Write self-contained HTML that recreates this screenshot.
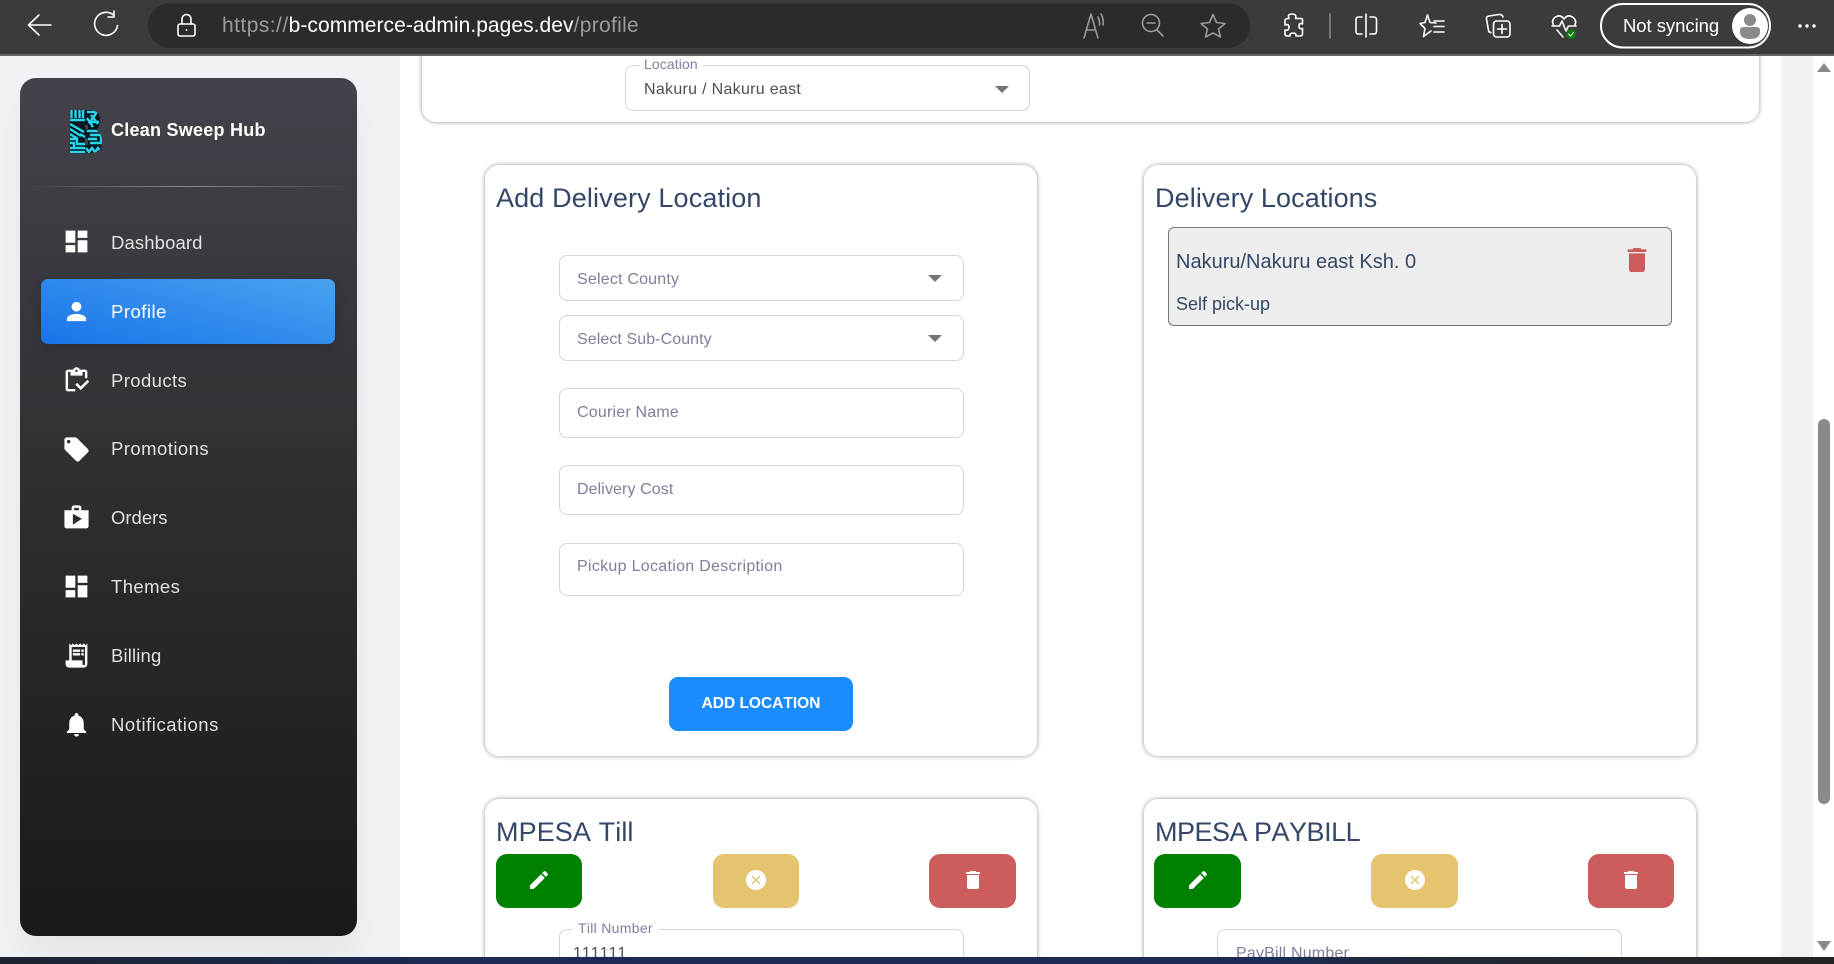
<!DOCTYPE html>
<html><head><meta charset="utf-8"><title>Profile</title>
<style>
*{box-sizing:border-box}
html,body{margin:0;padding:0;width:1834px;height:964px;overflow:hidden;background:#f0f2f5;font-family:"Liberation Sans",Arial,sans-serif;font-kerning:none}
#wrap{position:absolute;left:0;top:0;width:1834px;height:964px;overflow:hidden;background:#f0f2f5}
.a{position:absolute}
.t{position:absolute;white-space:nowrap;line-height:30px;height:30px}
#main{position:absolute;left:400px;top:56px;width:1381px;height:901px;background:#fff}
.card{position:absolute;background:#fff;border-radius:14px;box-shadow:0 0 5px rgba(0,0,0,.42)}
.f{position:absolute;border:1px solid #d2d6da;border-radius:8px;background:#fff}
.ph{color:#7b809a;font-size:16px;letter-spacing:.2px}
.h{color:#344767;font-size:27px;letter-spacing:.1px}
.car{position:absolute;width:0;height:0;border-left:7px solid transparent;border-right:7px solid transparent;border-top:7px solid #757575}
.nav{color:rgba(255,255,255,.86);font-size:18.5px;left:111px}
.ic{position:absolute;left:62px;width:29px;height:29px;fill:#fff}
.btn{position:absolute;top:854px;height:54px;border-radius:11px}
.btn svg{position:absolute;left:50%;top:50%;width:24px;height:24px;margin:-13px 0 0 -12px;fill:#fff}
.g{background:#008000}.y{background:#e5c470}.r{background:#cd5c5c}
</style></head><body><div id="wrap">

<!-- sidebar -->
<div class="a" style="left:20px;top:78px;width:337px;height:858px;border-radius:16px;background:linear-gradient(180deg,#42424a,#191919);box-shadow:0 20px 27px rgba(0,0,0,.05)"></div>
<svg class="a" style="left:70px;top:110px;width:32px;height:43px" viewBox="0 0 32 43">
<defs><clipPath id="b"><path d="M0 0H21Q30 1 30 10Q30 17 26 20Q32 23 32 31Q32 43 21 43H0ZM15 15V19H18V15ZM15 28V35H18V28Z" clip-rule="evenodd"/></clipPath></defs>
<g clip-path="url(#b)"><rect width="32" height="43" fill="#06181e"/>
<g stroke="#2bd4ee" stroke-width="2.400" fill="none">
<path d="M1.500 0V8M5.500 0V8M9.500 0V8M13 0V8M0 10H15M0 14L14 22M0 19L11 26M0 24L8 29M0 29H7V34H15M0 33H4V37M0 38H15M0 42H15"/>
<path d="M17 2H27L20 12H29M21 5L28 14M17 8L23 17M17 21H30M20 25H31V33M18 29H27M20 33H32M16 38L19 42L22 38L25 42L28 38L31 42"/>
<path d="M10 24L15 27"/>
</g></g></svg>
<div class="t" style="left:111px;top:115px;color:#fff;font-weight:bold;font-size:18px;letter-spacing:.25px">Clean Sweep Hub</div>
<div class="a" style="left:20px;top:186px;width:337px;height:1px;background:linear-gradient(90deg,rgba(255,255,255,0),rgba(255,255,255,.4),rgba(255,255,255,0))"></div>

<div class="a" style="left:41px;top:279px;width:294px;height:65px;border-radius:7px;background:linear-gradient(195deg,#49a3f1,#1a73e8);box-shadow:0 4px 12px rgba(0,0,0,.18)"></div>

<svg class="ic" style="top:227px" viewBox="0 0 24 24"><path d="M3 13h8V3H3v10zm0 8h8v-6H3v6zm10 0h8V11h-8v10zm0-18v6h8V3h-8z"/></svg>
<div class="t nav" style="top:228px;letter-spacing:.12px">Dashboard</div>
<svg class="ic" style="top:297px" viewBox="0 0 24 24"><path d="M12 12c2.21 0 4-1.79 4-4s-1.79-4-4-4-4 1.79-4 4 1.79 4 4 4zm0 2c-2.67 0-8 1.34-8 4v2h16v-2c0-2.66-5.33-4-8-4z"/></svg>
<div class="t nav" style="top:297px;color:#fff;letter-spacing:.5px">Profile</div>
<svg class="ic" style="top:366px" viewBox="0 0 24 24"><path d="M5 5h2v3h10V5h2v5h2V5c0-1.1-.9-2-2-2h-4.18C14.4 1.84 13.3 1 12 1s-2.4.84-2.82 2H5c-1.1 0-2 .9-2 2v14c0 1.1.9 2 2 2h6v-2H5V5zm7-2c.55 0 1 .45 1 1s-.45 1-1 1-1-.45-1-1 .45-1 1-1z"/><path d="M21 11.5L15.51 17l-3.01-3-1.5 1.5 4.51 4.5 6.99-7z"/></svg>
<div class="t nav" style="top:366px;letter-spacing:.4px">Products</div>
<svg class="ic" style="top:435px" viewBox="0 0 24 24"><path d="M21.41 11.58l-9-9C12.05 2.22 11.55 2 11 2H4c-1.1 0-2 .9-2 2v7c0 .55.22 1.05.59 1.42l9 9c.36.36.86.58 1.41.58.55 0 1.05-.22 1.41-.59l7-7c.37-.36.59-.86.59-1.41 0-.55-.23-1.06-.59-1.42zM5.5 7C4.67 7 4 6.33 4 5.5S4.67 4 5.5 4 7 4.67 7 5.5 6.33 7 5.5 7z"/></svg>
<div class="t nav" style="top:434px;letter-spacing:.45px">Promotions</div>
<svg class="ic" style="top:503px" viewBox="0 0 24 24"><path d="M16 6V4c0-1.11-.89-2-2-2h-4c-1.11 0-2 .89-2 2v2H2v13c0 1.11.89 2 2 2h16c1.11 0 2-.89 2-2V6h-6zm-6-2h4v2h-4V4zM9 18V9l7.5 4L9 18z"/></svg>
<div class="t nav" style="top:503px">Orders</div>
<svg class="ic" style="top:572px" viewBox="0 0 24 24"><path d="M3 13h8V3H3v10zm0 8h8v-6H3v6zm10 0h8V11h-8v10zm0-18v6h8V3h-8z"/></svg>
<div class="t nav" style="top:572px;letter-spacing:.4px">Themes</div>
<svg class="ic" style="top:641px" viewBox="0 0 24 24"><path d="M19.5 3.5 18 2l-1.5 1.5L15 2l-1.5 1.5L12 2l-1.5 1.5L9 2 7.5 3.5 6 2v14H3v3c0 1.66 1.34 3 3 3h12c1.66 0 3-1.34 3-3V2l-1.5 1.5zM19 19c0 .55-.45 1-1 1s-1-.45-1-1v-3H8V5h11v14z"/><path d="M9 7h6v2H9zm7 0h2v2h-2zm-7 3h6v2H9zm7 0h2v2h-2z"/></svg>
<div class="t nav" style="top:641px;letter-spacing:.15px">Billing</div>
<svg class="ic" style="top:710px" viewBox="0 0 24 24"><path d="M12 22c1.1 0 2-.9 2-2h-4c0 1.1.89 2 2 2zm6-6v-5c0-3.07-1.64-5.64-4.5-6.32V4c0-.83-.67-1.5-1.5-1.5s-1.5.67-1.5 1.5v.68C7.63 5.36 6 7.92 6 11v5l-2 2v1h16v-1l-2-2z"/></svg>
<div class="t nav" style="top:710px;letter-spacing:.55px">Notifications</div>

<!-- main -->
<div id="main"></div>

<!-- top card -->
<div class="card" style="left:422px;top:20px;width:1337px;height:102px"></div>
<div class="f" style="left:625px;top:65px;width:405px;height:46px"></div>
<div class="t" style="left:639px;top:49px;color:#7b809a;font-size:14px;background:#fff;padding:0 5px;height:22px;line-height:30px;overflow:visible;letter-spacing:.1px">Location</div>
<div class="t" style="left:644px;top:75px;color:#495057;font-size:16px;letter-spacing:.3px">Nakuru / Nakuru east</div>
<div class="car" style="left:995px;top:86px"></div>

<!-- add location card -->
<div class="card" style="left:485px;top:165px;width:552px;height:591px"></div>
<div class="t h" style="left:496px;top:183px;letter-spacing:.14px">Add Delivery Location</div>
<div class="f" style="left:559px;top:255px;width:405px;height:46px"></div>
<div class="t ph" style="left:577px;top:265px">Select County</div>
<div class="car" style="left:928px;top:275px"></div>
<div class="f" style="left:559px;top:315px;width:405px;height:46px"></div>
<div class="t ph" style="left:577px;top:325px;letter-spacing:.08px">Select Sub-County</div>
<div class="car" style="left:928px;top:335px"></div>
<div class="f" style="left:559px;top:388px;width:405px;height:50px"></div>
<div class="t ph" style="left:577px;top:398px">Courier Name</div>
<div class="f" style="left:559px;top:465px;width:405px;height:50px"></div>
<div class="t ph" style="left:577px;top:475px;letter-spacing:.1px">Delivery Cost</div>
<div class="f" style="left:559px;top:543px;width:405px;height:53px"></div>
<div class="t ph" style="left:577px;top:552px;letter-spacing:.3px">Pickup Location Description</div>
<div class="a" style="left:669px;top:677px;width:184px;height:54px;border-radius:9px;background:#1a8cff;color:#fff;font-weight:bold;font-size:15.5px;text-align:center;line-height:54px">ADD LOCATION</div>

<!-- delivery locations card -->
<div class="card" style="left:1144px;top:165px;width:552px;height:591px"></div>
<div class="t h" style="left:1155px;top:183px">Delivery Locations</div>
<div class="a" style="left:1168px;top:227px;width:504px;height:99px;background:#eee;border:1px solid #777;border-radius:6px"></div>
<div class="t" style="left:1176px;top:247px;color:#344767;font-size:20px">Nakuru/Nakuru east Ksh. 0</div>
<div class="t" style="left:1176px;top:289px;color:#344767;font-size:18px">Self pick-up</div>
<svg class="a" style="left:1621px;top:244px;width:32px;height:32px;fill:#cd5c5c" viewBox="0 0 24 24"><path d="M6 19c0 1.1.9 2 2 2h8c1.1 0 2-.9 2-2V7H6v12zM19 4h-3.5l-1-1h-5l-1 1H5v2h14V4z"/></svg>

<!-- mpesa till -->
<div class="card" style="left:485px;top:799px;width:552px;height:165px;border-radius:14px 14px 0 0"></div>
<div class="t h" style="left:496px;top:817px">MPESA Till</div>
<div class="btn g" style="left:496px;width:86px"><svg viewBox="0 0 24 24"><path d="M3 17.25V21h3.75L17.81 9.94l-3.75-3.75L3 17.25zM20.71 7.04c.39-.39.39-1.02 0-1.41l-2.34-2.34c-.39-.39-1.02-.39-1.41 0l-1.83 1.83 3.75 3.75 1.83-1.83z"/></svg></div>
<div class="btn y" style="left:713px;width:86px"><svg viewBox="0 0 24 24"><circle cx="12" cy="12" r="10"/><path d="M8 8l8 8M16 8l-8 8" stroke="#e5c470" stroke-width="1.3" fill="none"/></svg></div>
<div class="btn r" style="left:929px;width:87px"><svg viewBox="0 0 24 24"><path d="M6 19c0 1.1.9 2 2 2h8c1.1 0 2-.9 2-2V7H6v12zM19 4h-3.5l-1-1h-5l-1 1H5v2h14V4z"/></svg></div>
<div class="f" style="left:559px;top:929px;width:405px;height:35px;border-radius:8px 8px 0 0"></div>
<div class="t" style="left:573px;top:913px;color:#7b809a;font-size:14px;background:#fff;padding:0 5px;height:22px;overflow:visible;letter-spacing:.3px">Till Number</div>
<div class="t" style="left:573px;top:939px;color:#495057;font-size:16px;height:18px;overflow:hidden">111111</div>

<!-- mpesa paybill -->
<div class="card" style="left:1144px;top:799px;width:552px;height:165px;border-radius:14px 14px 0 0"></div>
<div class="t h" style="left:1155px;top:817px;letter-spacing:-.5px">MPESA PAYBILL</div>
<div class="btn g" style="left:1154px;width:87px"><svg viewBox="0 0 24 24"><path d="M3 17.25V21h3.75L17.81 9.94l-3.75-3.75L3 17.25zM20.71 7.04c.39-.39.39-1.02 0-1.41l-2.34-2.34c-.39-.39-1.02-.39-1.41 0l-1.83 1.83 3.75 3.75 1.83-1.83z"/></svg></div>
<div class="btn y" style="left:1371px;width:87px"><svg viewBox="0 0 24 24"><circle cx="12" cy="12" r="10"/><path d="M8 8l8 8M16 8l-8 8" stroke="#e5c470" stroke-width="1.3" fill="none"/></svg></div>
<div class="btn r" style="left:1588px;width:86px"><svg viewBox="0 0 24 24"><path d="M6 19c0 1.1.9 2 2 2h8c1.1 0 2-.9 2-2V7H6v12zM19 4h-3.5l-1-1h-5l-1 1H5v2h14V4z"/></svg></div>
<div class="f" style="left:1217px;top:929px;width:405px;height:35px;border-radius:8px 8px 0 0"></div>
<div class="t ph" style="left:1236px;top:939px;height:18px;overflow:hidden">PayBill Number</div>

<!-- right gutter & scrollbar -->
<div class="a" style="left:1781px;top:56px;width:32px;height:901px;background:#f0f2f5"></div>
<div class="a" style="left:1813px;top:56px;width:21px;height:901px;background:#fff"></div>
<div class="a" style="left:1818px;top:419px;width:12px;height:385px;border-radius:6px;background:#8a8a8a"></div>
<svg class="a" style="left:1816px;top:61px;width:16px;height:12px" viewBox="0 0 16 12"><path d="M8 2L15 11H1z" fill="#8a8a8a"/></svg>
<svg class="a" style="left:1816px;top:940px;width:16px;height:12px" viewBox="0 0 16 12"><path d="M1 1H15L8 11z" fill="#8a8a8a"/></svg>

<!-- bottom strip -->
<div class="a" style="left:0;top:957px;width:1834px;height:7px;background:linear-gradient(90deg,#1c2430 0%,#1a2a55 25%,#1a2a55 68%,#222835 80%,#232323 100%)"></div>

<!-- toolbar -->
<div class="a" style="left:0;top:0;width:1834px;height:54px;background:#3b3b3b"></div>
<div class="a" style="left:0;top:54px;width:1834px;height:2px;background:#666"></div>
<div class="a" style="left:148px;top:3px;width:1102px;height:45px;border-radius:23px;background:#2b2b2b"></div>
<div class="t" style="left:222px;top:11px;font-size:21px;letter-spacing:.05px;color:#9b9b9b"><span style="letter-spacing:.45px">https://</span><span style="color:#fff">b-commerce-admin.pages.dev</span><span style="letter-spacing:.3px">/profile</span></div>
<svg class="a" style="left:0;top:0;width:1834px;height:54px" viewBox="0 0 1834 54" fill="none" stroke="#fff" stroke-width="1.6" stroke-linecap="round" stroke-linejoin="round">
<path d="M51 25H29M39 15L28.5 25L39 35"/>
<path d="M114 15.5A11.5 11.5 0 1 0 117.5 25.5M114 11V17H108"/>
<rect x="178" y="24" width="17" height="12" rx="2"/><path d="M182 24V19A4.5 4.5 0 0 1 191 19V24"/><circle cx="186.5" cy="30" r="1" fill="#fff" stroke="none"/>
<g stroke="#9a9a9a">
<path d="M1084 38L1091 14L1098 38M1086.5 30H1095.5M1098 17Q1100 21 1099.5 25M1101 14Q1104 19 1103 25"/>
<circle cx="1151" cy="23" r="8.5"/><path d="M1147 23H1155M1157 30L1163 36"/>
<path d="M1213 14.5L1216.5 22.5L1225 23.5L1218.5 29L1220.5 37L1213 33L1205.5 37L1207.5 29L1201 23.5L1209.5 22.5Z"/>
</g>
<path d="M1289 18.5Q1287 14 1292 14Q1297 14 1295.5 18.5H1301Q1302.5 18.5 1302.5 20V24Q1299 22.5 1299 26Q1299 29.5 1302.5 28.5V34Q1302.5 36 1300 36H1296Q1296.5 33 1293 33Q1289.5 33 1290 36H1287Q1285 36 1285 34V30Q1289 31 1289 27Q1289 23.5 1285 25V20.5Q1285 18.5 1289 18.5Z"/>
<path d="M1330 14V38" stroke="#777" stroke-width="2"/>
<path d="M1362 17H1358.5Q1356 17 1356 19.5V31.5Q1356 34 1358.5 34H1362M1370 17H1373.5Q1376.5 17 1376.5 19.5V31.5Q1376.5 34 1373.5 34H1370M1366 14V37"/>
<path d="M1436 23L1430 22.5L1427.5 15L1425 22.5L1420 23.5L1425 28.5L1423.5 36.5L1431 31M1434 21H1444M1434 26.5H1444M1434 32H1444"/>
<path d="M1491 32.5Q1489 32.5 1488.5 30.5L1486.5 19Q1486 16.5 1489 16L1499 14.5Q1502 14 1503 17"/><rect x="1493.5" y="21" width="16.5" height="16" rx="3"/><path d="M1502 24.5V33.5M1497.5 29H1506.5"/>
<path d="M1563 37L1557 30M1553.5 25Q1551 20 1555.5 17Q1560.5 14 1564 19Q1567.5 14 1572.5 17Q1577 20 1575 25M1552 26H1559.5L1562 21L1566 31L1568.5 26H1576"/>
<circle cx="1571" cy="34" r="5" fill="#107c10" stroke="none"/><path d="M1568.5 34L1570.5 36L1573.5 32.5" stroke="#d8ecd8" stroke-width="1"/>
<rect x="1601" y="4" width="169" height="43.5" rx="21.7" stroke-width="2"/>
</svg>
<div class="t" style="left:1623px;top:11px;font-size:18.5px;letter-spacing:-.05px;color:#fff">Not syncing</div>
<svg class="a" style="left:1732px;top:8px;width:36px;height:36px" viewBox="0 0 36 36"><circle cx="18" cy="18" r="18" fill="#fff"/><circle cx="18" cy="12" r="6" fill="#8a8a8a"/><path d="M8 22Q8 19 12 19H24Q28 19 28 22V24Q28 31 18 31Q8 31 8 24Z" fill="#8a8a8a"/></svg>
<svg class="a" style="left:1795px;top:20px;width:24px;height:12px" viewBox="0 0 24 12" fill="#fff"><circle cx="5" cy="6" r="1.7"/><circle cx="12" cy="6" r="1.7"/><circle cx="19" cy="6" r="1.7"/></svg>
</div></body></html>
